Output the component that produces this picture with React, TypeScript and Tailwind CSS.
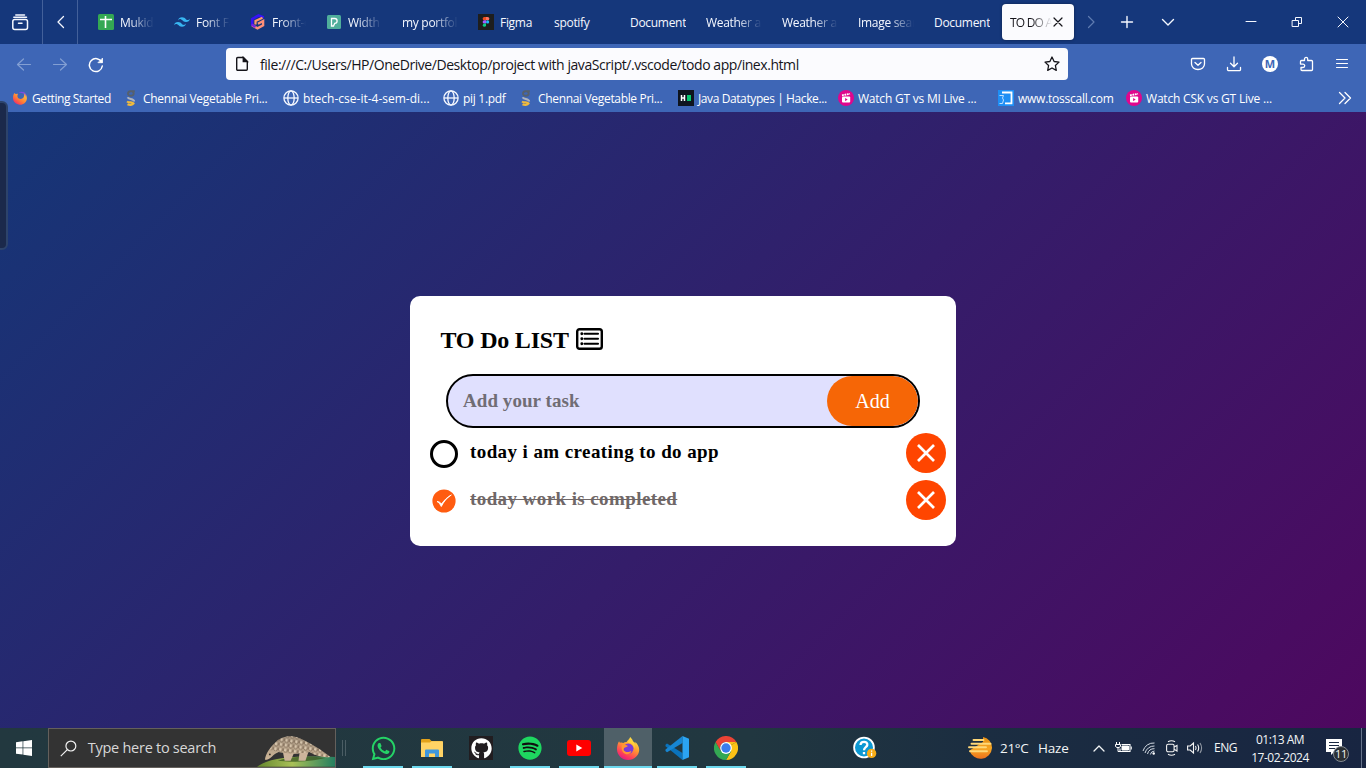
import type { ReactNode } from "react";
import { FaWhatsapp, FaGithub, FaSpotify } from "react-icons/fa6";
import { SiTailwindcss } from "react-icons/si";

type Tab = { label: string; icon?: ReactNode; fade?: boolean };
type Bookmark = { label: string; icon: ReactNode; width: string; track: string };

const Stroke = ({ size, d, w = 1.2, className = "" }: { size: number; d: string; w?: number; className?: string }) => (
  <svg width={size} height={size} viewBox={`0 0 ${size} ${size}`} fill="none" stroke="currentColor" strokeWidth={w} strokeLinecap="round" strokeLinejoin="round" className={`block shrink-0 ${className}`}>
    <path d={d} />
  </svg>
);

const SheetIcon = () => (
  <svg width="16" height="16" viewBox="0 0 16 16" className="shrink-0">
    <rect width="16" height="16" rx="1.5" fill="#34a853" />
    <path d="M2 5.5h12M7.5 2v12" stroke="#fff" strokeWidth="1.6" />
  </svg>
);
const FrontIcon = () => (
  <svg width="16" height="16" viewBox="0 0 16 16" fill="none" className="shrink-0">
    <path d="M13.800 3.500L8.500 1.500 2.200 5v6" stroke="#3512f5" strokeWidth="2.600" />
    <path d="M12.500 3.800L5.500 7v3.500" stroke="#ff9a6b" strokeWidth="2.200" />
    <path d="M2 11.200l5.500 3.200 5.600-3.200V7L8 9.700" stroke="#ff8f78" strokeWidth="2.400" />
    <path d="M1.500 10.500l4 2.500" stroke="#7a22e0" strokeWidth="2.200" />
  </svg>
);
const WidthIcon = () => (
  <svg width="16" height="16" viewBox="0 0 16 16" className="shrink-0">
    <rect x="1" y="1" width="14" height="14" rx="1.5" fill="#4fae9b" />
    <path d="M5.500 12V4.500h3.200a2.400 2.400 0 010 4.800L7.500 12z" fill="none" stroke="#fff" strokeWidth="1.300" />
  </svg>
);
const FigmaIcon = () => (
  <svg width="16" height="16" viewBox="0 0 16 16" className="shrink-0">
    <rect width="16" height="16" fill="#1e1e1e" />
    <path d="M8 3H6.300a1.600 1.600 0 000 3.300H8z" fill="#f24e1e" />
    <path d="M8 3h1.700a1.600 1.600 0 010 3.300H8z" fill="#ff7262" />
    <path d="M8 6.300H6.300a1.600 1.600 0 000 3.300H8z" fill="#a259ff" />
    <circle cx="9.600" cy="7.900" r="1.600" fill="#1abcfe" />
    <path d="M8 9.600H6.300A1.600 1.600 0 108 11.300z" fill="#0acf83" />
  </svg>
);
const FirefoxIcon = ({ size }: { size: number }) => (
  <svg width={size} height={size} viewBox="0 0 24 24" className="block shrink-0">
    <defs>
      <linearGradient id={`ff${size}`} x1="0.800" y1="0" x2="0.250" y2="1">
        <stop offset="0" stopColor="#fff44f" />
        <stop offset="0.400" stopColor="#ffa12e" />
        <stop offset="0.750" stopColor="#ff4456" />
        <stop offset="1" stopColor="#e31587" />
      </linearGradient>
    </defs>
    <path d="M14.200 1c2 2 2.600 3.400 3 4.600 1.200.6 1.800 1.400 2.300 2.200 0-.7-.1-1.200-.4-2 3 2.600 4.200 6 4.100 8.200C23 19.600 18.200 24 12.200 24S1 19.300 1 13.200c0-3 .8-6 2.100-7.900.3.800.5 1.100 1 1.500.700-.6 2.200-.4 3.200.1 1-.6 2-1 3.300-.9C11.500 4.400 13.400 3.200 14.200 1z" fill={`url(#ff${size})`} />
    <circle cx="12.300" cy="12.600" r="5.200" fill="#7a3bd8" />
    <path d="M6 8.500c2.500-.4 4.500.3 6 1.600-1.400 1.300-2.900 1-4 2.200-1 1.500.2 3.200 2.200 3.600 2.600.5 4.400-1 5.200-.6-.6 2.300-3 3.200-5.200 2.900C6.800 17.500 4.800 13.700 6 8.500z" fill="#ff9632" />
    <path d="M12 7c3-1 6.500 1.500 6 6 1.400-3 .6-7.500-3.500-9C12.700 4.600 12 5.700 12 7z" fill="#ffd43a" />
  </svg>
);
const StartedIcon = () => (
  <svg width="16" height="16" viewBox="0 0 16 16" className="shrink-0">
    <defs>
      <linearGradient id="gs" x1="1" y1="0" x2="0.200" y2="1">
        <stop offset="0" stopColor="#7542e5" />
        <stop offset="0.300" stopColor="#ffb43c" />
        <stop offset="0.650" stopColor="#ff7a35" />
        <stop offset="1" stopColor="#f0246f" />
      </linearGradient>
    </defs>
    <path d="M11 1.800c3 1.400 4 3.800 3.900 6.400-.2 3.900-3.200 6.500-6.900 6.500S1 11.900 1 8.100C1 5.800 1.500 4 2.500 3c.3.500.6.8 1.100 1L6 3.800C4.700 6.500 5.700 9 8.600 9c3.300 0 4.600-3.500 2.400-7.200z" fill="url(#gs)" />
    <path d="M6.500 2.600c3-1.700 7-.4 7.600 3.100-1-1.700-2-2.300-3.200-2.500z" fill="#7f4ae8" />
  </svg>
);
const SIcon = () => (
  <svg width="16" height="16" viewBox="0 0 16 16" fill="none" className="shrink-0" strokeWidth="1.900">
    <path d="M11.800 1.200H7.500C5.800 1.300 5 2.300 5 3.600c0 3.200 5.700 2.700 5.700 0 0-1-.5-1.600-1.200-2" stroke="#56606d" />
    <path d="M4.700 7.200c.5 2.300 6.500 1.300 6.500 4.300" stroke="#b0b4bd" />
    <path d="M4 11.500c2 1.700 5 .2 6.500 2-1 1.700-4 1.700-6 .7" stroke="#f2bb3c" strokeWidth="2.200" />
  </svg>
);
const GlobeIcon = () => (
  <svg width="16" height="16" viewBox="0 0 16 16" fill="none" stroke="#f7f9ff" strokeWidth="1.300" className="shrink-0">
    <circle cx="8" cy="8" r="7.100" />
    <ellipse cx="8" cy="8" rx="3.200" ry="7.100" />
    <path d="M1 8h14" />
  </svg>
);
const HackerIcon = () => (
  <svg width="16" height="16" viewBox="0 0 16 16" className="shrink-0">
    <rect width="16" height="16" fill="#0e141e" />
    <path d="M3.500 5v6M6.500 5v6M3.500 8h3" stroke="#fff" strokeWidth="1.500" />
    <rect x="9" y="5" width="4" height="6" fill="#05c770" />
  </svg>
);
const ClapIcon = () => (
  <svg width="16" height="16" viewBox="0 0 16 16" className="shrink-0">
    <circle cx="8" cy="8" r="8" fill="#e0068d" />
    <rect x="4" y="6.600" width="8.200" height="6" rx="1" fill="#fff" />
    <path d="M4 5.300l8-1.500" stroke="#fff" strokeWidth="1.800" strokeDasharray="1.800 .7" />
    <path d="M7.100 8v3.200l2.600-1.600z" fill="#e0068d" />
  </svg>
);
const TossIcon = () => (
  <svg width="16" height="16" viewBox="0 0 16 16" className="shrink-0">
    <rect width="16" height="16" fill="#1e8ff5" />
    <path d="M4 2.500h9.500v10.800H7" fill="none" stroke="#fff" strokeWidth="1.800" />
    <path d="M1.500 5.500h4l-1 2.500 1 2-1 3.500h-3" fill="none" stroke="#bfe0ff" strokeWidth="1" />
  </svg>
);

const tabs: Tab[] = [
  { label: "Mukid", icon: <SheetIcon />, fade: true },
  { label: "Font Fa", icon: <SiTailwindcss size={16} className="shrink-0 text-[#38b6f1]" />, fade: true },
  { label: "Front-e", icon: <FrontIcon />, fade: true },
  { label: "Width", icon: <WidthIcon />, fade: true },
  { label: "my portfolio", fade: true },
  { label: "Figma", icon: <FigmaIcon /> },
  { label: "spotify" },
  { label: "Document" },
  { label: "Weather app", fade: true },
  { label: "Weather app", fade: true },
  { label: "Image search", fade: true },
  { label: "Document" },
];

const bookmarks: Bookmark[] = [
  { label: "Getting Started", icon: <StartedIcon />, width: "w-[111px]", track: "tracking-[-0.4px]" },
  { label: "Chennai Vegetable Pri...", icon: <SIcon />, width: "w-[160px]", track: "tracking-[-0.33px]" },
  { label: "btech-cse-it-4-sem-di...", icon: <GlobeIcon />, width: "w-[160px]", track: "tracking-[0px]" },
  { label: "pij 1.pdf", icon: <GlobeIcon />, width: "w-[75px]", track: "tracking-[-0.3px]" },
  { label: "Chennai Vegetable Pri...", icon: <SIcon />, width: "w-[160px]", track: "tracking-[-0.33px]" },
  { label: "Java Datatypes | Hacke...", icon: <HackerIcon />, width: "w-[160px]", track: "tracking-[-0.4px]" },
  { label: "Watch GT vs MI Live ...", icon: <ClapIcon />, width: "w-[160px]", track: "tracking-[-0.22px]" },
  { label: "www.tosscall.com", icon: <TossIcon />, width: "w-[128px]", track: "tracking-[-0.25px]" },
  { label: "Watch CSK vs GT Live ...", icon: <ClapIcon />, width: "w-[160px]", track: "tracking-[-0.2px]" },
];

function TabStrip() {
  return (
    <div className="flex h-11 items-center bg-[#15377b] text-[12px] text-[#f5f8ff]">
      <div className="flex h-full w-[43px] items-center border-r border-[#43609a] pl-3">
        <svg width="17" height="17" viewBox="0 0 17 17" fill="none" stroke="currentColor" strokeWidth="1.500" strokeLinecap="round">
          <rect x=".8" y="5.500" width="14.700" height="10" rx="2" />
          <path d="M1.800 3.300h12.700M3.800 1h8.700M6.500 9.300h3.500" />
        </svg>
      </div>
      <div className="flex h-full w-[35px] items-center justify-center border-r border-[#43609a] pl-px">
        <Stroke size={14} w={1.3} d="M9.500 1.500L4 7l5.500 5.500" />
      </div>
      <div className="flex w-[924px] pl-3">
        {tabs.map((t, i) => (
          <div key={i} className="flex w-[76px] items-center pl-2">
            <div className={`flex w-14 shrink-0 items-center gap-1.5 overflow-hidden whitespace-nowrap tracking-[-0.3px] ${t.fade ? "[mask-image:linear-gradient(to_right,#000_55%,transparent)]" : ""}`}>
              {t.icon}
              <span className="pt-px">{t.label}</span>
            </div>
          </div>
        ))}
      </div>
      <div className="flex h-9 w-[72px] items-center rounded-[4px] bg-[#fbfbfe] pl-2 text-[#15141a] shadow-[0_0_3px_rgba(0,0,0,.4)]">
        <span className="w-[42px] overflow-hidden whitespace-nowrap pt-px tracking-[-0.8px] [mask-image:linear-gradient(to_right,#000_50%,transparent)]">TO DO APP</span>
        <Stroke size={12} d="M2 2l8 8M10 2l-8 8" />
      </div>
      <Stroke size={14} d="M4.500 1.500L10 7l-5.500 5.500" className="ml-2.5 text-[#5f7bb0]" />
      <Stroke size={14} w={1.4} d="M7 1.500v11M1.500 7h11" className="ml-[22px]" />
      <Stroke size={14} w={1.4} d="M1.500 4.500L7 10l5.500-5.500" className="ml-[27px]" />
      <Stroke size={12} d="M1 5.500h10" w={1} className="ml-[70px]" />
      <Stroke size={12} d="M1.500 4.500h6v6h-6zM4.500 4.500v-3h6v6h-3" w={1} className="ml-[34px]" />
      <Stroke size={12} d="M1 1l10 10M11 1L1 11" w={1} className="ml-[34px]" />
    </div>
  );
}

function Toolbar() {
  return (
    <div className="flex h-10 items-center text-white">
      <Stroke size={16} d="M14.500 8.500h-13M7.500 3L1.500 8.500l6 5.500" className="ml-4 text-[#839fd3]" />
      <Stroke size={16} d="M1.500 8.500h13M8.500 3l6 5.500-6 5.500" className="ml-5 text-[#839fd3]" />
      <svg width="16" height="16" viewBox="0 0 16 16" className="ml-5 mt-px" fill="none" stroke="currentColor" strokeWidth="1.500" strokeLinecap="round">
        <path d="M13.700 5.200A6.500 6.500 0 1014.300 9" />
        <path d="M14.500 1.500v4.200h-4.200z" fill="currentColor" strokeWidth=".8" />
      </svg>
      <div className="ml-[122px] flex h-8 w-[842px] items-center rounded-[4px] bg-[#fbfbfe] text-[#15141a]">
        <svg width="16" height="16" viewBox="0 0 16 16" className="ml-2" fill="none" stroke="currentColor" strokeWidth="1.400">
          <path d="M3.700 1.500h5.600l4 4v7.800a1 1 0 01-1 1H3.700a1 1 0 01-1-1V2.500a1 1 0 011-1z" />
          <path d="M9.300 1.500v4h4z" fill="currentColor" />
        </svg>
        <span className="ml-2.5 w-[784px] whitespace-nowrap pt-0.5 text-[14px] leading-5 tracking-[-0.44px]">file:///C:/Users/HP/OneDrive/Desktop/project with javaScript/.vscode/todo app/inex.html</span>
        <Stroke size={16} w={1.300} d="M8 1l2.100 4.500 4.900.6-3.600 3.400.9 4.900L8 12l-4.300 2.400.9-4.900L1 6.100l4.900-.6z" />
      </div>
      <Stroke size={16} w={1.300} d="M2.500 2.500h11a1 1 0 011 1V8a6.500 5.500 0 01-13 0V3.500a1 1 0 011-1zM5 6.500l3 2.800 3-2.800" className="ml-[122px]" />
      <Stroke size={16} w={1.300} d="M8 1v9.500M4.500 7.300L8 10.700l3.500-3.400M1.500 11.500v2a1.200 1.200 0 001.200 1.200h10.600a1.200 1.200 0 001.200-1.200v-2" className="ml-5" />
      <div className="ml-5 flex size-4 items-center justify-center rounded-full bg-white pb-px text-[11px] font-bold leading-none text-[#3e66b6]">M</div>
      <Stroke size={16} w={1.300} d="M6.500 4.500V3a1.600 1.600 0 013.200 0v1.500h3.800a1 1 0 011 1v8a1 1 0 01-1 1H4a1 1 0 01-1-1v-2h2a1.700 1.700 0 000-3.400H2.500V5.500a1 1 0 011-1z" className="ml-5" />
      <Stroke size={16} w={1.100} d="M2.500 3.500h11M2.500 7.500h11M2.500 11.500h11" className="ml-5" />
    </div>
  );
}

function Bookmarks() {
  return (
    <div className="flex h-7 items-center pl-3 text-[12px] text-white">
      {bookmarks.map((b, i) => (
        <div key={i} className={`flex shrink-0 items-center gap-1 whitespace-nowrap ${b.width} ${b.track}`}>
          {b.icon}
          <span className="pt-px">{b.label}</span>
        </div>
      ))}
      <Stroke size={14} w={1.300} d="M1.500 1.500L7 7l-5.500 5.500M7 1.500L12.500 7 7 12.500" className="ml-[52px]" />
    </div>
  );
}

function Task({ text, done }: { text: string; done?: boolean }) {
  return (
    <li className="flex h-[47px] items-start">
      <span className="flex w-7 justify-center pt-[7px]">
        {done ? (
          <svg width="24" height="24" viewBox="0 0 24 24" className="mt-[1.5px]">
            <circle cx="12" cy="12" r="11.600" fill="#ff5c10" />
            <path d="M5 12.500c1.500.5 3 2.500 4.300 5C11.500 13 15 8.500 19.300 6 15.500 8 12 11.300 9.600 15 8.300 13.500 7 12.500 5 12.500z" fill="#fff" stroke="#fff" strokeWidth=".9" strokeLinejoin="round" />
          </svg>
        ) : (
          <span className="size-7 rounded-full border-[3px] border-black" />
        )}
      </span>
      <span className={`ml-3 mt-2 w-[436px] whitespace-nowrap text-[19px] font-bold leading-[22px] tracking-[0.41px] ${done ? "text-[#6f6767] line-through decoration-1" : "text-black"}`}>{text}</span>
      <span className="flex size-10 items-center justify-center rounded-full bg-[#ff4500] text-white">
        <svg width="18" height="18" viewBox="0 0 18 18" stroke="currentColor" strokeWidth="2.700">
          <path d="M1 1l16 16M17 1L1 17" />
        </svg>
      </span>
    </li>
  );
}

function TodoCard() {
  return (
    <div className="h-[250px] w-[546px] rounded-[10px] bg-white font-['Liberation_Serif',serif]">
      <h2 className="flex h-[59px] items-start gap-[7px] pl-[30.5px] pt-[29px] text-2xl font-bold leading-[30px] tracking-[-0.2px] text-black">
        <span>TO Do LIST</span>
        <svg width="27" height="22" viewBox="0 0 27 22" className="mt-[3px]" fill="none" stroke="#000">
          <rect x="1.200" y="1.200" width="24.600" height="19.600" rx="2.300" strokeWidth="2.400" />
          <path d="M8.500 5.800H22M8.500 10.800H22M8.500 15.800H22" strokeWidth="2.100" strokeLinecap="round" />
          <path d="M5.800 5.800h.01M5.800 10.800h.01M5.800 15.800h.01" strokeWidth="2.900" strokeLinecap="round" />
        </svg>
      </h2>
      <div className="ml-9 mt-[19px] flex h-[54px] w-[474px] overflow-hidden rounded-[27px] border-2 border-black bg-[#e0e0fe]">
        <span className="w-[379px] pl-[15px] text-[19px] font-bold leading-[50px] tracking-[0.06px] text-[#706d75]">Add your task</span>
        <button className="w-[91px] rounded-[26px] bg-[#f66606] text-[20px] text-white">Add</button>
      </div>
      <ul className="pl-5 pt-[5px]">
        <Task text="today i am creating to do app" />
        <Task text="today work is completed" done />
      </ul>
    </div>
  );
}

const Pangolin = () => (
  <svg width="80" height="38" viewBox="0 0 80 38" className="block">
    <defs>
      <linearGradient id="hill" x1="0" x2="1">
        <stop offset="0" stopColor="#65872e" />
        <stop offset="0.450" stopColor="#a9c057" />
        <stop offset="1" stopColor="#247f60" />
      </linearGradient>
      <linearGradient id="shell" x1="0" y1="0" x2="0" y2="1">
        <stop offset="0" stopColor="#a39380" />
        <stop offset="1" stopColor="#cdb596" />
      </linearGradient>
      <pattern id="scales" width="5" height="5" patternUnits="userSpaceOnUse" patternTransform="rotate(8)">
        <path d="M0 0q.5 4 2.500 4.700Q4.600 4 5 0" fill="none" stroke="#75614d" strokeWidth=".7" />
        <path d="M2 .5v2.500" stroke="#ead9bf" strokeWidth="1.300" />
      </pattern>
    </defs>
    <path d="M1 38C14 28 42 27 80 28v10z" fill="url(#hill)" />
    <path d="M22 32c10-5 34-5 48-3-12 3-34 5-48 3z" fill="#34501f" opacity=".7" />
    <path d="M27 22l2 10h6l3-7 6-1-1 8h7l3-9z" fill="#cdb49b" />
    <path d="M9 31c1-7 5-12 10-17C26 6 38 5 48 11c8 4 17 9 27 17-7 1-14-1-21-5-10 2-22 2-31 0-6 2-8 8-14 8z" fill="url(#shell)" />
    <path d="M14 21c1-3 2-4 5-7C26 6 38 5 48 11c8 4 17 9 27 17-7 1-14-1-21-5-10 2-22 2-31 0z" fill="url(#scales)" />
    <circle cx="14" cy="25.500" r=".9" fill="#302820" />
  </svg>
);

const ChromeIcon = () => (
  <svg width="24" height="24" viewBox="0 0 24 24" className="block">
    <path d="M12 12L22.400 6A12 12 0 0112 24l5.200-9z" fill="#fbc116" />
    <path d="M12 12l5.200 3L12 24A12 12 0 011.600 6l5.200 9z" fill="#34a853" />
    <path d="M12 6h10.400L12 12z" fill="#fbc116" />
    <path d="M12 6h10.400A12 12 0 001.600 6L6.800 15A6 6 0 0112 6z" fill="#ea4335" />
    <circle cx="12" cy="12" r="5.900" fill="#fff" />
    <circle cx="12" cy="12" r="4.700" fill="#3b7ded" />
  </svg>
);

const apps: { icon: ReactNode; state: string }[] = [
  { icon: <FaWhatsapp size={27} className="text-[#25d366]" />, state: "run" },
  {
    icon: (
      <svg width="22" height="18" viewBox="0 0 22 18">
        <path d="M0 1a1 1 0 011-1h7.500l2 2H21v6H0z" fill="#e3a21a" />
        <path d="M0 3.500h9l1.500-1.300H22V18H0z" fill="#ffd365" />
        <path d="M4 18v-6.500a1 1 0 011-1h12a1 1 0 011 1V18h-4v-3.500H8V18z" fill="#3f97dd" />
      </svg>
    ),
    state: "run",
  },
  { icon: <span className="flex size-6 items-center justify-center bg-[#211d20]"><FaGithub size={21} className="text-white" /></span>, state: "" },
  { icon: <span className="flex size-6 items-center justify-center rounded-full bg-[radial-gradient(#101010_60%,transparent_62%)]"><FaSpotify size={24} className="text-[#1ed760]" /></span>, state: "run" },
  {
    icon: (
      <svg width="24" height="16" viewBox="0 0 24 16">
        <rect width="24" height="16" rx="3" fill="#f00" />
        <path d="M9.300 4.500v7l6-3.500z" fill="#fff" />
      </svg>
    ),
    state: "run",
  },
  { icon: <FirefoxIcon size={24} />, state: "active" },
  {
    icon: (
      <svg width="24" height="24" viewBox="0 0 24 24">
        <path d="M2 7.500L.5 8.700v1.600L17.500 24V17z" fill="#0a73bd" />
        <path d="M2 16.300L.5 15.100v-1.600L17.500 0v7z" fill="#1786d3" />
        <path d="M17.500 0L24 2.800v18.400L17.500 24z" fill="#2ba4f2" />
      </svg>
    ),
    state: "run",
  },
  { icon: <ChromeIcon />, state: "run" },
];

function Taskbar() {
  return (
    <div className="flex h-10 items-center bg-[linear-gradient(90deg,#22383f_0%,#213740_55%,#1b2d41_72%,#182541_100%)] text-[#f2f5f6]">
      <svg width="16" height="16" viewBox="0 0 16 16" className="ml-4" fill="#fff">
        <path d="M0 2.200l6.600-.9v6.200H0zM7.300 1.200L16 0v7.500H7.300zM0 8.300h6.600v6.300L0 13.700zM7.300 8.300H16V16l-8.700-1.200z" />
      </svg>
      <div className="ml-4 flex h-10 w-72 items-center border border-[#64605c] bg-[#333333]">
        <svg width="17" height="17" viewBox="0 0 17 17" className="ml-[11px]" fill="none" stroke="#f3f3f3" strokeWidth="1.200">
          <circle cx="11" cy="6" r="5" />
          <path d="M7.400 9.600L.8 16.200" />
        </svg>
        <span className="ml-[11px] w-[170px] whitespace-nowrap text-[14.5px] tracking-[-0.27px] text-[#d8d8d8]">Type here to search</span>
        <Pangolin />
      </div>
      <div className="ml-[6px] h-4 w-1 border-x border-[#4b5d64]" />
      <div className="ml-[13px] flex h-10 gap-px">
        {apps.map((a, i) => (
          <div key={i} className={`flex w-12 flex-col items-center ${a.state === "active" ? "bg-[#4f6068]" : ""}`}>
            <div className="flex h-[38px] items-center pt-0.5">{a.icon}</div>
            {a.state && <div className={`h-0.5 bg-[#6cd8ed] ${a.state === "active" ? "w-12" : "w-10"}`} />}
          </div>
        ))}
      </div>
      <svg width="24" height="24" viewBox="0 0 24 24" className="ml-[103px]">
        <circle cx="11" cy="11.500" r="9.900" fill="#0c98d2" stroke="#fff" strokeWidth="1.800" />
        <path d="M7.500 9c.2-4.500 7.300-4 6.800 0-.3 2.200-3.300 2.300-3.300 5.200M11 16v2.300" fill="none" stroke="#fff" strokeWidth="2.300" />
        <circle cx="18.600" cy="17.400" r="4.700" fill="#f7ac17" />
        <path d="M18.600 16.700v3.200M18.600 14.500v1.200" stroke="#fff" strokeWidth="1.300" />
      </svg>
      <svg width="24" height="24" viewBox="0 0 24 24" className="ml-[91px]">
        <defs>
          <linearGradient id="sun" x1="0" y1="0" x2="0" y2="1">
            <stop offset="0" stopColor="#e58d15" />
            <stop offset=".550" stopColor="#f6a623" />
            <stop offset="1" stopColor="#ed711d" />
          </linearGradient>
        </defs>
        <path d="M15 1a11 11 0 019 11 11.500 11.500 0 01-22.500 2.500L15 6z" fill="url(#sun)" />
        <path d="M5.500 4h10M3.500 7.700h19M1 11.300h17M2 15.200h17" stroke="#ffd878" strokeWidth="1.900" strokeLinecap="round" />
      </svg>
      <span className="ml-2 w-[38px] whitespace-nowrap text-[13.500px] tracking-[-0.300px]">21°C</span>
      <span className="w-[55px] whitespace-nowrap text-[13.500px] tracking-[-0.200px]">Haze</span>
      <Stroke size={12} w={1.300} d="M1 9l5-5 5 5" />
      <svg width="17" height="14" viewBox="0 0 17 14" className="ml-[10px]" fill="none" stroke="#fff">
        <path d="M6.500 3.500h8.500v7H5v-3" strokeWidth="1.100" />
        <path d="M7 5h6.500v4H7z" fill="#fff" />
        <path d="M16.300 5.500v3M1.500 1v2M4.500 1v2M.5 3.500h5v2l-1.500 1h-2l-1.500-1zM3 7v3.500h2" />
      </svg>
      <svg width="14" height="14" viewBox="0 0 14 14" className="ml-[10px]" fill="none" stroke="#d5dce5" strokeWidth="1">
        <path d="M1 10A11 11 0 0112.500 2M3 12A9.500 9.500 0 0112.500 5M5.500 13A7 7 0 0112.500 7.700M8.300 13.500a4.500 4.500 0 014.200-3.500" />
        <circle cx="11.700" cy="12.500" r="1.200" fill="#fff" stroke="none" />
      </svg>
      <svg width="12" height="16" viewBox="0 0 12 16" className="ml-[10px]" fill="none" stroke="#f4f4f4" strokeWidth="1.100">
        <rect x=".6" y="4.300" width="7.500" height="7.500" rx="1.500" />
        <path d="M8.100 7L11 5.500v5.500L8.100 9.300M2 1.800Q5.500-.3 9 1.800M2 14.300q3.500 1.900 7 0" />
      </svg>
      <svg width="17" height="14" viewBox="0 0 17 14" className="ml-[9px]" fill="none" stroke="#f4f4f4" strokeWidth="1.100">
        <path d="M.6 5h2.600l3.300-3v10L3.200 9H.6zM8.500 5q1.200 2 0 4M10.600 3.500q2.200 3.500 0 7" />
        <path d="M13 2q3.200 5 0 10" opacity=".55" />
      </svg>
      <span className="ml-[10px] w-9 whitespace-nowrap text-[12px] tracking-[-0.500px]">ENG</span>
      <div className="flex w-[60px] flex-col items-center whitespace-nowrap pt-px text-[12px] leading-[18px] tracking-[-0.500px]">
        <span>01:13 AM</span>
        <span>17-02-2024</span>
      </div>
      <div className="relative ml-4 mt-1.5 h-6 w-6">
        <svg width="16" height="16" viewBox="0 0 16 16">
          <path d="M0 0h16v13h-8l-3 3v-3H0z" fill="#fff" />
          <path d="M3 3.500h10M3 6.500h10M3 9.500h6" stroke="#1a2842" />
        </svg>
        <span className="absolute left-[7px] top-[7px] flex size-4 items-center justify-center rounded-full border border-[#858b91] bg-[#2b3034] text-[11px] tracking-[-0.400px]">11</span>
      </div>
      <div className="ml-[11px] h-10 w-px bg-[#66738a]" />
    </div>
  );
}

export default function App() {
  return (
    <div className="relative flex h-[768px] w-[1366px] flex-col overflow-hidden font-['Open_Sans','Noto_Sans',sans-serif]">
      <TabStrip />
      <div className="bg-[#3e66b6]">
        <Toolbar />
        <Bookmarks />
      </div>
      <main className="flex h-[616px] items-start justify-center bg-[linear-gradient(135deg,#153677,#4e085f)] pt-[184px]">
        <TodoCard />
      </main>
      <Taskbar />
      <div className="absolute -left-1 top-[101px] h-[149px] w-3 rounded-r-[6px] border-2 border-[#2d436b] bg-[#1b294b]" />
    </div>
  );
}
